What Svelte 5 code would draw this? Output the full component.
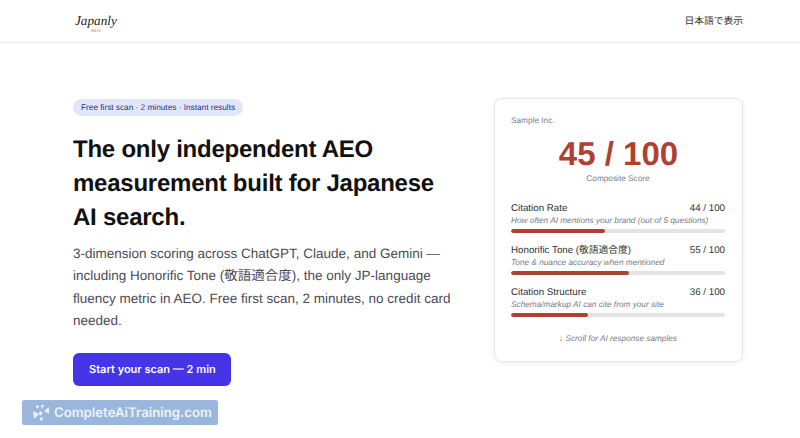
<script>
  const metrics = [
    { name: 'Citation Rate', score: 44, note: 'How often AI mentions your brand (out of 5 questions)' },
    { name: 'Honorific Tone (敬語適合度)', score: 55, note: 'Tone & nuance accuracy when mentioned' },
    { name: 'Citation Structure', score: 36, note: 'Schema/markup AI can cite from your site' }
  ];
</script>

<style>
  :global(body) {
    background: #fff;
    overflow: hidden;
  }

  .page {
    font-family: "Liberation Sans", "Noto Sans CJK JP", sans-serif;
    text-rendering: geometricPrecision;
    color: #111;
    height: 438px;
    overflow: hidden;
  }

  .nav {
    display: flex;
    justify-content: space-between;
    align-items: center;
    height: 42px;
    padding: 0 57px 0 75px;
    border-bottom: 1px solid #e6e7ea;
  }

  .logo {
    display: flex;
    flex-direction: column;
    align-items: center;
    font-family: "Liberation Serif", serif;
    font-style: italic;
    font-size: 13.2px;
    line-height: 15px;
    color: #1a1a1a;
    margin-top: 4px;
  }

  .logo small {
    font-size: 4.5px;
    line-height: 5px;
    color: #d9633a;
    letter-spacing: 0.3px;
  }

  .lang {
    font-size: 9.75px;
    color: #333;
    margin-bottom: 3px;
  }

  .hero {
    display: flex;
    justify-content: space-between;
    padding: 55px 57px 0 73px;
  }

  .left {
    width: 385px;
    padding-top: 1px;
  }

  .pill {
    width: fit-content;
    background: #e2e6fb;
    color: #2f2f8a;
    border-radius: 9px;
    font-size: 8.25px;
    line-height: 17px;
    padding: 0 8px;
  }

  h1 {
    margin: 17px 0 0;
    font-size: 24px;
    line-height: 34px;
    letter-spacing: -0.24px;
    font-weight: 700;
    color: #111;
  }

  .lead {
    margin: 8px 0 0;
    font-size: 13.5px;
    line-height: 22.3px;
    color: #4b4b55;
  }

  .cta {
    width: fit-content;
    margin-top: 21px;
    background: #4534e8;
    color: #fff;
    font-family: Inter, sans-serif;
    font-weight: 600;
    font-size: 11px;
    line-height: 33px;
    padding: 0 15.5px 0 16px;
    border-radius: 6px;
  }

  .card {
    width: 249px;
    height: 264px;
    box-sizing: border-box;
    padding: 16px 17px 0 16px;
    border: 1px solid #e6e7ea;
    border-radius: 8px;
    box-shadow: 0 1px 4px rgba(0, 0, 0, 0.08);
  }

  .company {
    font-size: 8.25px;
    line-height: 12px;
    color: #7b7f8a;
  }

  .score {
    text-align: center;
    font-size: 33px;
    font-weight: 700;
    line-height: 38px;
    color: #b04032;
    margin: 8px -1px 0 0;
  }

  .score-label {
    text-align: center;
    font-size: 8.25px;
    line-height: 12px;
    color: #7b7f8a;
    margin-bottom: 15px;
  }

  .metric {
    margin-bottom: 9px;
  }

  .row {
    display: flex;
    justify-content: space-between;
    font-size: 9.75px;
    line-height: 18px;
    margin-bottom: -3px;
    color: #333;
  }

  .note {
    font-size: 8.25px;
    line-height: 11px;
    font-style: italic;
    color: #777b86;
  }

  .track {
    height: 4px;
    margin-top: 3px;
    background: #e4e4e6;
    border-radius: 2px;
    overflow: hidden;
  }

  .fill {
    height: 100%;
    background: #b04032;
    border-radius: 2px;
  }

  .hint {
    text-align: center;
    font-size: 8.25px;
    line-height: 12px;
    font-style: italic;
    color: #777b86;
    margin-top: 16px;
  }

  .badge {
    position: absolute;
    left: 22px;
    top: 400px;
    width: 196px;
    height: 25px;
    display: flex;
    align-items: center;
    gap: 4px;
    padding-left: 10px;
    box-sizing: border-box;
    background: #9ab6dc;
    border-radius: 2px;
    color: #eef3fa;
    font-family: Inter, sans-serif;
    font-size: 13.2px;
    font-weight: 600;
    white-space: nowrap;
  }
</style>

<div class="page">
  <div class="nav">
    <div class="logo">Japanly<small>AEO</small></div>
    <div class="lang">日本語で表示</div>
  </div>

  <div class="hero">
    <div class="left">
      <div class="pill">Free first scan · 2 minutes · Instant results</div>
      <h1>The only independent AEO measurement built for Japanese AI search.</h1>
      <p class="lead">3-dimension scoring across ChatGPT, Claude, and Gemini — including Honorific Tone (敬語適合度), the only JP-language fluency metric in AEO. Free first scan, 2 minutes, no credit card needed.</p>
      <div class="cta">Start your scan — 2 min</div>
    </div>

    <div class="card">
      <div class="company">Sample Inc.</div>
      <div class="score">45 / 100</div>
      <div class="score-label">Composite Score</div>
      {#each metrics as m}
        <div class="metric">
          <div class="row"><span>{m.name}</span><span>{m.score} / 100</span></div>
          <div class="note">{m.note}</div>
          <div class="track"><div class="fill" style="width: {m.score}%"></div></div>
        </div>
      {/each}
      <div class="hint">↓ Scroll for AI response samples</div>
    </div>
  </div>

  <div class="badge">
    <svg width="18" height="18" viewBox="0 0 18 18" fill="#eef3fa">
      <path d="M1 7l6 3-5 5z" />
      <path d="M4 1l3 1-1 3-2-2z" />
      <path d="M9 1h3l-2 4z" />
      <path d="M17 3l0 7-5-3z" />
      <path d="M8 7l3 2-3 3-1-3z" />
      <path d="M8 14l3-1-1 4-2-1z" />
    </svg>
    <span>CompleteAiTraining.com</span>
  </div>
</div>
